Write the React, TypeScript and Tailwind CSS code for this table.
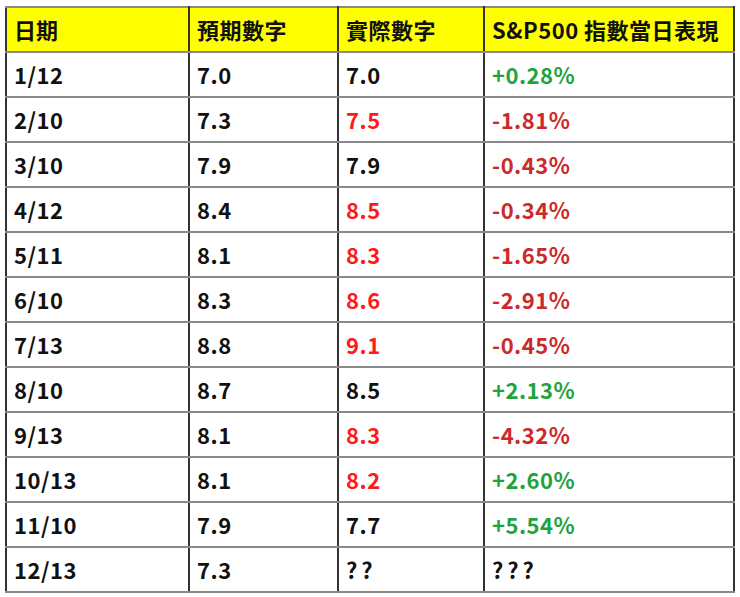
const rows: { d: string; e: string; a: string; aRed: boolean; p: string; up?: boolean }[] = [
  { d: "1/12", e: "7.0", a: "7.0", aRed: false, p: "+0.28%", up: true },
  { d: "2/10", e: "7.3", a: "7.5", aRed: true, p: "-1.81%", up: false },
  { d: "3/10", e: "7.9", a: "7.9", aRed: false, p: "-0.43%", up: false },
  { d: "4/12", e: "8.4", a: "8.5", aRed: true, p: "-0.34%", up: false },
  { d: "5/11", e: "8.1", a: "8.3", aRed: true, p: "-1.65%", up: false },
  { d: "6/10", e: "8.3", a: "8.6", aRed: true, p: "-2.91%", up: false },
  { d: "7/13", e: "8.8", a: "9.1", aRed: true, p: "-0.45%", up: false },
  { d: "8/10", e: "8.7", a: "8.5", aRed: false, p: "+2.13%", up: true },
  { d: "9/13", e: "8.1", a: "8.3", aRed: true, p: "-4.32%", up: false },
  { d: "10/13", e: "8.1", a: "8.2", aRed: true, p: "+2.60%", up: true },
  { d: "11/10", e: "7.9", a: "7.7", aRed: false, p: "+5.54%", up: true },
  { d: "12/13", e: "7.3", a: "??", aRed: false, p: "???" },
];

const cell = "h-[45px] px-[7px] border-x-2 border-x-[#333] border-y-2 border-y-[#8a8a8a] text-left align-middle";

export default function App() {
  return (
    <div className="w-[740px] h-[597px] bg-white pt-[6px] pl-[5px] font-['Noto_Sans_CJK_TC','Noto_Sans',sans-serif] font-bold text-[22px] text-[#111]">
      <table className="w-[728px] border-collapse border-2 border-[#333] table-fixed">
        <colgroup>
          <col className="w-[183px]" />
          <col className="w-[149px]" />
          <col className="w-[146px]" />
          <col className="w-[250px]" />
        </colgroup>
        <thead>
          <tr className="bg-[#ffff00]">
            <th className={cell + " font-bold"}>日期</th>
            <th className={cell + " font-bold tracking-[0.5px]"}>預期數字</th>
            <th className={cell + " font-bold tracking-[0.5px]"}>實際數字</th>
            <th className={cell + " font-bold tracking-[0.5px]"}>S&amp;P500 指數當日表現</th>
          </tr>
        </thead>
        <tbody>
          {rows.map((r) => (
            <tr key={r.d}>
              <td className={cell + " tracking-[0.5px]"}>{r.d}</td>
              <td className={cell + " tracking-[0.5px]"}>{r.e}</td>
              <td
                className={
                  cell +
                  (r.aRed ? " text-[#ff1a1a]" : "") +
                  (r.a === "??" ? " tracking-[4px]" : " tracking-[0.5px]")
                }
              >
                {r.a}
              </td>
              <td
                className={
                  cell +
                  (r.up === true
                    ? " text-[#1fa33f] tracking-[0.5px]"
                    : r.up === false
                      ? " text-[#cc2a2a] tracking-[0.5px]"
                      : " tracking-[4px]")
                }
              >
                {r.p}
              </td>
            </tr>
          ))}
        </tbody>
      </table>
    </div>
  );
}
